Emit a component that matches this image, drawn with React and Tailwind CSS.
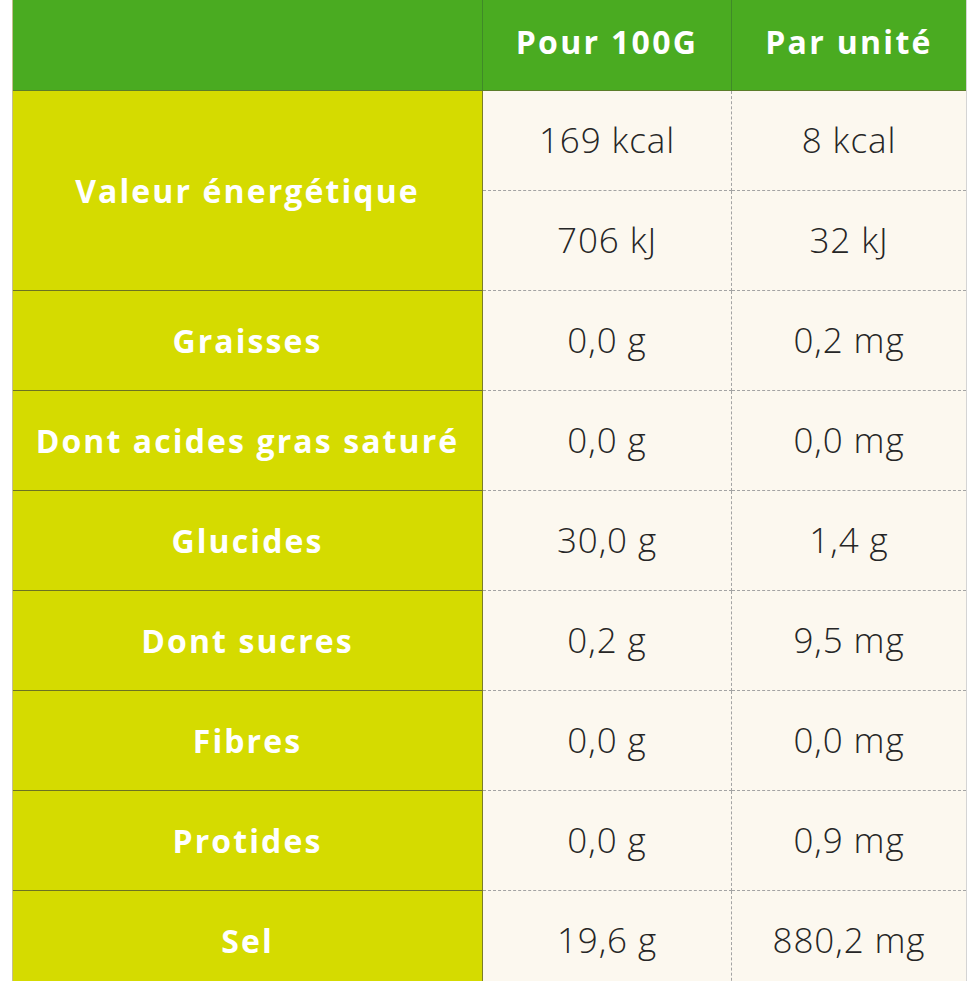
import React from "react";

const rows = [
  ["Graisses", "0,0 g", "0,2 mg"],
  ["Dont acides gras saturé", "0,0 g", "0,0 mg"],
  ["Glucides", "30,0 g", "1,4 g"],
  ["Dont sucres", "0,2 g", "9,5 mg"],
  ["Fibres", "0,0 g", "0,0 mg"],
  ["Protides", "0,0 g", "0,9 mg"],
  ["Sel", "19,6 g", "880,2 mg"],
];

const font = { fontFamily: '"Open Sans", "Noto Sans", sans-serif' };

function Label({ children, span }) {
  return (
    <div
      className={`flex items-center justify-center whitespace-nowrap bg-[#d5db00] border-r border-b border-r-[#7b7d2a] border-b-[#6c7222] text-white font-bold text-[32px] tracking-[2.1px] ${span ? "row-span-2 h-[200px]" : "h-[100px]"}`}
    >
      {children}
    </div>
  );
}

function Val({ children, last }) {
  return (
    <div
      className={`flex items-center justify-center h-[100px] bg-[#fcf8ef] border-b border-dashed border-b-[#a3a3a3] text-[#262626] font-light text-[35px] tracking-[0.9px] ${last ? "" : "border-r border-r-[#a3a3a3]"}`}
    >
      {children}
    </div>
  );
}

export default function App() {
  return (
    <div className="w-[980px] h-[981px] overflow-hidden bg-white" style={font}>
      <div className="ml-[12px] w-[955px] border-l border-r border-l-[#c4bf8f] border-r-[#d4d4d4]">
        <div className="grid grid-cols-[470px_249px_234px]">
          <div className="h-[91px] bg-[#4aab21] border-r border-b border-r-[#3f8a28] border-b-[#5b7d2a]" />
          <div className="h-[91px] bg-[#4aab21] border-r border-b border-r-[#3f8a28] border-b-[#5b7d2a] flex items-center justify-center text-white font-bold text-[32px] pb-[6px] tracking-[2.3px]">
            Pour 100G
          </div>
          <div className="h-[91px] bg-[#4aab21] border-b border-b-[#5b7d2a] flex items-center justify-center text-white font-bold text-[32px] pb-[6px] tracking-[2.3px]">
            Par unité
          </div>

          <Label span>Valeur énergétique</Label>
          <Val>169 kcal</Val>
          <Val last>8 kcal</Val>
          <Val>706 kJ</Val>
          <Val last>32 kJ</Val>

          {rows.map(([l, a, b]) => (
            <React.Fragment key={l}>
              <Label>{l}</Label>
              <Val>{a}</Val>
              <Val last>{b}</Val>
            </React.Fragment>
          ))}
        </div>
      </div>
    </div>
  );
}
